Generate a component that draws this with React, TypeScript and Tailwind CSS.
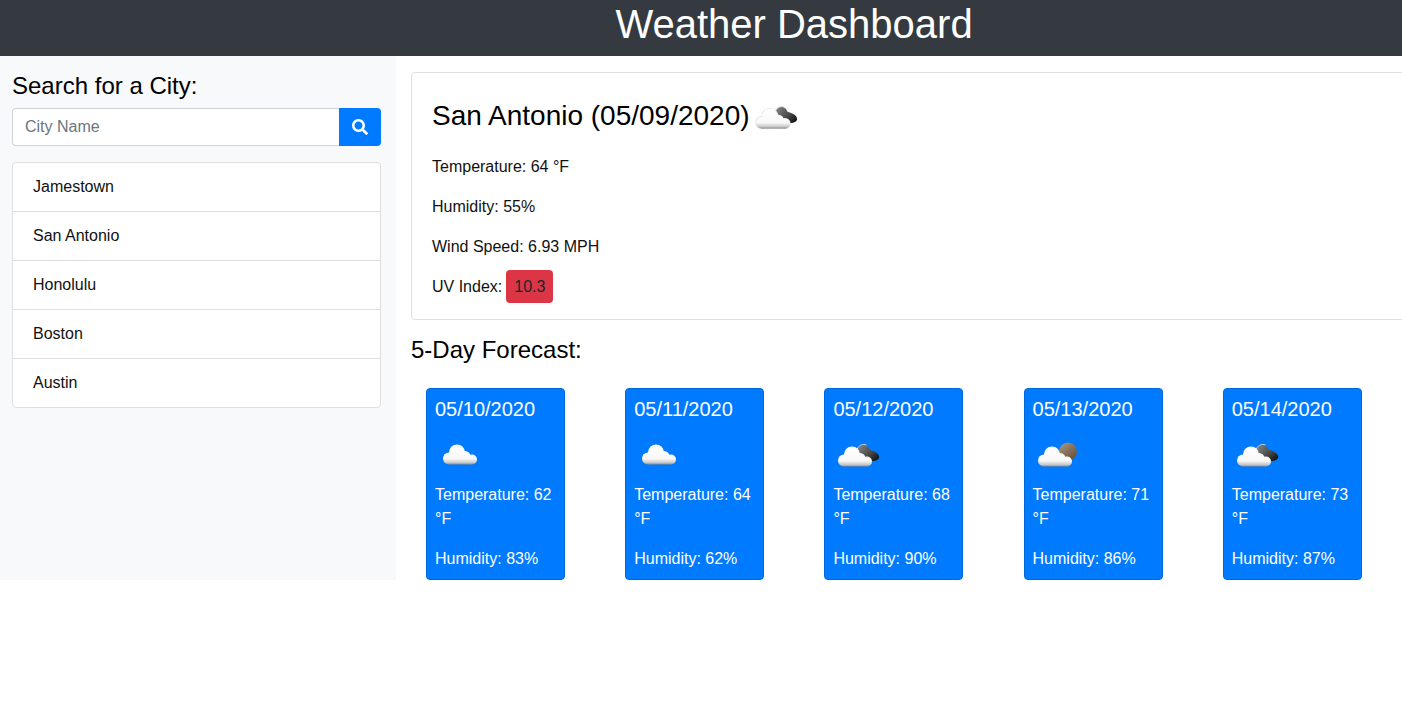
import { FaSearch } from "react-icons/fa";

type Variant = "plain" | "dark" | "brown";

function CloudIcon({ variant, id, outlined = false }: { variant: Variant; id: string; outlined?: boolean }) {
  const dx = variant === "plain" ? 3 : 0;
  const dy = variant === "plain" ? -1.5 : 0.5;
  const shapes = (
    <>
      <circle cx="11" cy="31" r="6" />
      <circle cx="19" cy="25" r="8" />
      <circle cx="27" cy="29" r="5.5" />
      <circle cx="34" cy="32" r="5" />
      <rect x="11" y="28" width="23" height="9" />
    </>
  );
  return (
    <svg viewBox="0 0 50 50" className="w-[50px] h-[50px] shrink-0 block">
      <defs>
        <linearGradient id={`${id}c`} gradientUnits="userSpaceOnUse" x1="0" y1="17" x2="0" y2="38">
          <stop offset="0" stopColor="#ffffff" />
          <stop offset="0.68" stopColor="#f8f8f8" />
          <stop offset="0.86" stopColor="#c9c9c9" />
          <stop offset="1" stopColor="#6f6f6f" />
        </linearGradient>
        <linearGradient id={`${id}d`} gradientUnits="userSpaceOnUse" x1="26" y1="16" x2="46" y2="30">
          <stop offset="0" stopColor="#858585" />
          <stop offset="0.55" stopColor="#484848" />
          <stop offset="1" stopColor="#0c0c0c" />
        </linearGradient>
        <linearGradient id={`${id}b`} gradientUnits="userSpaceOnUse" x1="28" y1="14" x2="42" y2="32">
          <stop offset="0" stopColor="#a8957e" />
          <stop offset="1" stopColor="#5f4a32" />
        </linearGradient>
      </defs>
      {variant === "dark" && (
        <g>
          <path d="M24 21 a7 7 0 0 1 9.5 -5" fill="none" stroke="#dcdcdc" strokeWidth="1" />
          <g fill={`url(#${id}d)`}>
            <circle cx="30.5" cy="22" r="6" />
            <ellipse cx="35.5" cy="26" rx="11" ry="5.5" transform="rotate(14 35.5 26)" />
          </g>
        </g>
      )}
      {variant === "brown" && <circle cx="35" cy="22.5" r="9" fill={`url(#${id}b)`} />}
      <g transform={`translate(${dx} ${dy})`}>
        {outlined && (
          <g fill="#d8d8d8" stroke="#d8d8d8" strokeWidth="1.2">
            {shapes}
          </g>
        )}
        <g fill={`url(#${id}c)`}>{shapes}</g>
      </g>
    </svg>
  );
}

const cities = ["Jamestown", "San Antonio", "Honolulu", "Boston", "Austin"];

const forecast: { date: string; temp: number; hum: number; v: Variant }[] = [
  { date: "05/10/2020", temp: 62, hum: 83, v: "plain" },
  { date: "05/11/2020", temp: 64, hum: 62, v: "plain" },
  { date: "05/12/2020", temp: 68, hum: 90, v: "dark" },
  { date: "05/13/2020", temp: 71, hum: 86, v: "brown" },
  { date: "05/14/2020", temp: 73, hum: 87, v: "dark" },
];

export default function App() {
  return (
    <div className="min-h-[715px] overflow-hidden bg-white text-[16px] leading-6 text-[#111] font-['Liberation_Sans',Arial,sans-serif]">
      <header className="h-14 bg-[#343a40] text-white flex justify-center pl-[186px]">
        <h1 className="text-[40px] leading-[48px]">Weather Dashboard</h1>
      </header>
      <div className="flex">
        <aside className="w-[396px] shrink-0 bg-[#f8f9fa] px-3 pt-4 pr-[15px]">
          <h2 className="text-[24px] leading-[28px] mb-2 text-black">Search for a City:</h2>
          <div className="flex h-[38px] mb-4">
            <input
              placeholder="City Name"
              className="flex-1 min-w-0 h-full bg-white border border-[#ced4da] border-r-0 rounded-l px-3 text-[16px] outline-none placeholder:text-[#6c757d]"
            />
            <button className="w-[42px] h-full bg-[#007bff] rounded-r flex items-center justify-center text-white">
              <FaSearch className="w-4 h-4" />
            </button>
          </div>
          <ul className="bg-white border border-[#dfdfdf] rounded">
            {cities.map((c, i) => (
              <li
                key={c}
                className={`px-5 flex items-center ${i > 0 ? "border-t border-[#dfdfdf] h-[49px]" : "h-[48px]"}`}
              >
                {c}
              </li>
            ))}
          </ul>
        </aside>
        <main className="flex-1 min-w-0 overflow-hidden pl-[15px] pt-4">
          <section className="w-[1020px] bg-white border border-[#dfdfdf] rounded pt-5 pb-4 px-5">
            <h3 className="flex items-center h-[46px] mb-4 text-[28px] text-black">
              <span className="mr-px">San Antonio (05/09/2020)</span>
              <CloudIcon variant="dark" id="main" outlined />
            </h3>
            <p className="mb-4">Temperature: 64 °F</p>
            <p className="mb-4">Humidity: 55%</p>
            <p className="mb-[11px]">Wind Speed: 6.93 MPH</p>
            <div className="flex items-center">
              <span>UV Index:</span>
              <span className="ml-[4px] h-[33px] px-2 flex items-center bg-[#dc3545] rounded text-[#212529]">10.3</span>
            </div>
          </section>
          <h2 className="mt-4 mb-[23px] text-[24px] leading-[28.8px] text-black">5-Day Forecast:</h2>
          <div className="flex gap-[60.2px] pl-[15px]">
            {forecast.map((f, i) => (
              <article
                key={f.date}
                className="w-[139px] h-[192px] shrink-0 bg-[#007bff] border border-[#0069d9] rounded text-white p-2"
              >
                <div className="text-[20px] leading-6 mb-2">{f.date}</div>
                <CloudIcon variant={f.v} id={`f${i}`} />
                <p className="mt-1 mb-4">Temperature: {f.temp} °F</p>
                <p>Humidity: {f.hum}%</p>
              </article>
            ))}
          </div>
        </main>
      </div>
    </div>
  );
}
